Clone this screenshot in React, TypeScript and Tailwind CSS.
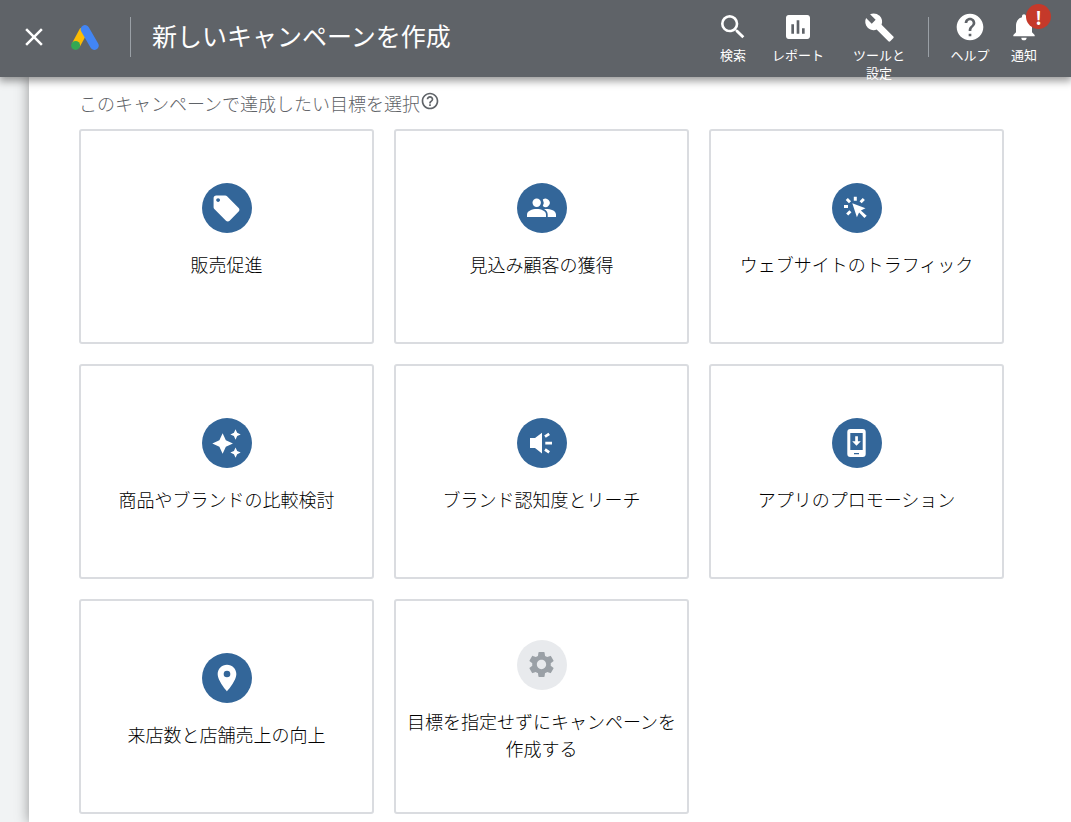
import type { ReactNode } from "react";
import {
  MdAssessment,
  MdAutoAwesome,
  MdBuild,
  MdClose,
  MdHelp,
  MdHelpOutline,
  MdLocalOffer,
  MdNotifications,
  MdPlace,
  MdSearch,
  MdSettings,
} from "react-icons/md";

function AdsLogo() {
  return (
    <svg viewBox="0 0 28 25" className="h-[25px] w-7" aria-hidden="true">
      <path d="M13 5 4.8 20.3" stroke="#fbbc04" strokeWidth="8.6" />
      <circle cx="4.6" cy="20.4" r="4.5" fill="#34a853" />
      <path d="M14 4.4 23.4 20.6" stroke="#4285f4" strokeWidth="8.7" strokeLinecap="round" />
    </svg>
  );
}

function PeopleIcon() {
  return (
    <svg viewBox="0 0 50 50" className="size-[50px]" fill="currentColor" aria-hidden="true">
      <circle cx="19.7" cy="19.8" r="4.2" />
      <path d="M25.8 16.6a4.2 4.2 0 1 1 0 6.4 6.4 6.4 0 0 0 0-6.4z" />
      <path d="M10 34v-2.6c0-3.5 5.2-5.4 9.7-5.4s9.3 1.900 9.300 5.400V34z" />
      <path d="M27 26.100c5.500-.5 12 1.300 12 5.300V34h-8.300v-2.600c0-2.200-1.500-4-3.700-5.300z" />
    </svg>
  );
}

function ClickIcon() {
  return (
    <svg viewBox="0 0 50 50" className="size-[50px]" fill="currentColor" aria-hidden="true">
      <path d="m20.300 20.300 13.200 5-4.600 2.200 5.800 5.300-2.300 2.300-5.300-5.600-2.200 4.700z" />
      <path
        d="M23.300 13.700v4M12 23.400h4M14.800 16l3.200 3.200M31.800 16l-3.200 3.200M15.200 31.500l3.200-3.200"
        stroke="currentColor"
        strokeWidth="3"
      />
    </svg>
  );
}

function SpeakerIcon() {
  return (
    <svg viewBox="0 0 50 50" className="size-[50px]" fill="currentColor" aria-hidden="true">
      <path d="M13 20h5l7-5.300v20.800L18 30h-5z" />
      <path
        d="M28 18.600l4.200-2.800M28.300 25.100H35M28 31.500l4.200 2.800"
        stroke="currentColor"
        strokeWidth="2.800"
      />
    </svg>
  );
}

function PhoneIcon() {
  return (
    <svg viewBox="0 0 50 50" className="size-[50px]" fill="currentColor" aria-hidden="true">
      <path
        fillRule="evenodd"
        d="M18.300 11h12.400a3 3 0 0 1 3 3v22a3 3 0 0 1-3 3H18.300a3 3 0 0 1-3-3V14a3 3 0 0 1 3-3zM18.300 15v17h12.400V15zM22 35v1.200h5V35z"
      />
      <path d="M23.200 18.200h2.700v5h2.900l-4.300 4.600-4.300-4.600h3z" />
    </svg>
  );
}

type Goal = { label: string; icon: ReactNode; muted?: boolean };

const goals: Goal[] = [
  { label: "販売促進", icon: <MdLocalOffer size={31} /> },
  { label: "見込み顧客の獲得", icon: <PeopleIcon /> },
  { label: "ウェブサイトのトラフィック", icon: <ClickIcon /> },
  { label: "商品やブランドの比較検討", icon: <MdAutoAwesome size={31} /> },
  { label: "ブランド認知度とリーチ", icon: <SpeakerIcon /> },
  { label: "アプリのプロモーション", icon: <PhoneIcon /> },
  { label: "来店数と店舗売上の向上", icon: <MdPlace size={32} /> },
  { label: "目標を指定せずにキャンペーンを作成する", icon: <MdSettings size={31} />, muted: true },
];

function GoalCard({ label, icon, muted }: Goal) {
  return (
    <button
      type="button"
      className="flex h-[215px] flex-col items-center justify-center gap-[18px] rounded-[3px] border-2 border-[#dadce0] bg-white px-2 pb-3 text-black"
    >
      <span
        className={
          muted
            ? "flex size-[50px] items-center justify-center rounded-full bg-[#e8eaed] text-[#9aa0a6]"
            : "flex size-[50px] items-center justify-center rounded-full bg-[#336699] text-white"
        }
      >
        {icon}
      </span>
      <span className="text-[18px] leading-[27px] font-light">{label}</span>
    </button>
  );
}

function Tool({ label, className, children }: { label: string; className: string; children: ReactNode }) {
  return (
    <button type="button" className={`flex shrink-0 flex-col items-center gap-[3px] ${className}`}>
      <span className="relative flex size-8 items-center justify-center">{children}</span>
      <span className="text-[13px] leading-[18px]">{label}</span>
    </button>
  );
}

export default function App() {
  return (
    <div className="flex min-h-screen flex-col bg-[#f1f3f4] font-['Noto_Sans_CJK_JP',sans-serif]">
      <header className="relative z-10 flex h-[77px] items-start bg-[#5f6368] pr-5 pl-[19px] text-white shadow-[0_3px_8px_1px_rgba(0,0,0,0.4)]">
        <div className="flex h-[74px] flex-1 items-center">
          <button type="button" aria-label="閉じる">
            <MdClose size={30} />
          </button>
          <div className="ml-[22px]">
            <AdsLogo />
          </div>
          <div className="ml-[31px] h-10 w-px bg-[#9aa0a6]" />
          <h1 className="ml-[21px] pb-0.5 text-[25px] whitespace-nowrap">新しいキャンペーンを作成</h1>
        </div>
        <nav className="flex h-[66px] items-start pt-[11px]">
          <Tool label="検索" className="w-[52px]">
            <MdSearch size={32} />
          </Tool>
          <Tool label="レポート" className="w-[78px]">
            <MdAssessment size={32} />
          </Tool>
          <Tool label="ツールと設定" className="w-[84px] px-[14px]">
            <MdBuild size={31} />
          </Tool>
          <div className="mt-[6px] mr-[14px] ml-[7px] h-10 w-px bg-[#9aa0a6]" />
          <Tool label="ヘルプ" className="w-[54px]">
            <MdHelp size={32} />
          </Tool>
          <Tool label="通知" className="w-[54px]">
            <MdNotifications size={32} />
            <span className="absolute -top-[7px] -right-[11px] flex size-[25px] items-center justify-center rounded-full bg-[#c5392a] text-[18px] leading-none font-bold">
              !
            </span>
          </Tool>
        </nav>
      </header>
      <main className="ml-[29px] flex-1 bg-white pt-[13px] pr-[67px] pb-2 pl-[50px] shadow-[0_0_12px_1px_rgba(0,0,0,0.35)]">
        <div className="flex items-start">
          <h2 className="text-[18px] leading-[27px] font-light text-[#5f6368]">
            このキャンペーンで達成したい目標を選択
          </h2>
          <button type="button" aria-label="ヘルプ" className="mt-px text-[#5f6368]">
            <MdHelpOutline size={20} />
          </button>
        </div>
        <div className="mt-3 grid grid-cols-3 gap-5">
          {goals.map((goal) => (
            <GoalCard key={goal.label} {...goal} />
          ))}
        </div>
      </main>
    </div>
  );
}
